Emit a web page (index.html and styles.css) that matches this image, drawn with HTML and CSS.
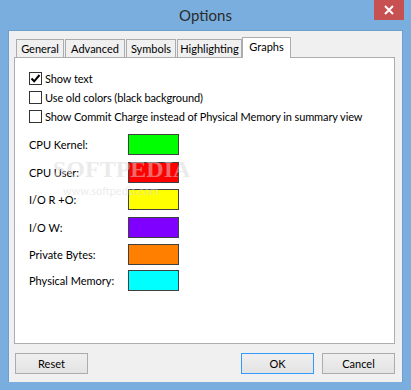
FILE: index.html
```html
<!DOCTYPE html>
<html lang="en">
<head>
<meta charset="UTF-8">
<title>Options</title>
<link rel="stylesheet" href="styles.css">
</head>
<body>

<div class="window">
    <div class="titlebar">
        <span class="title">Options</span>
        <div class="close-btn">
            <svg width="10" height="10" viewBox="0 0 10 10"><path d="M1 1 L9 9 M9 1 L1 9" stroke="#fff" stroke-width="2"/></svg>
        </div>
    </div>

    <div class="client">
        <div class="tabs">
            <div class="tab tab-general">General</div>
            <div class="tab tab-advanced">Advanced</div>
            <div class="tab tab-symbols">Symbols</div>
            <div class="tab tab-highlight">Highlighting</div>
            <div class="tab tab-graphs active">Graphs</div>
        </div>

        <div class="panel">
            <label class="check-row"><span class="checkbox checked"><svg width="11" height="11" viewBox="0 0 11 11"><path d="M1.5 5.5 L4.2 8.3 L9.5 2" fill="none" stroke="#000" stroke-width="2"/></svg></span>Show text</label>
            <label class="check-row"><span class="checkbox"></span>Use old colors (black background)</label>
            <label class="check-row"><span class="checkbox"></span>Show Commit Charge instead of Physical Memory in summary view</label>

            <div class="colors">
                <div class="color-row"><span class="color-label">CPU Kernel:</span><span class="swatch lime"></span></div>
                <div class="color-row"><span class="color-label">CPU User:</span><span class="swatch red"></span></div>
                <div class="color-row"><span class="color-label">I/O R +O:</span><span class="swatch yellow"></span></div>
                <div class="color-row"><span class="color-label">I/O W:</span><span class="swatch purple"></span></div>
                <div class="color-row short"><span class="color-label">Private Bytes:</span><span class="swatch orange"></span></div>
                <div class="color-row short"><span class="color-label">Physical Memory:</span><span class="swatch cyan"></span></div>
            </div>

            <div class="watermark">
                <div class="wm-big">SOFTPEDIA</div>
                <div class="wm-small">www.softpedia.com</div>
            </div>
        </div>

        <div class="buttons">
            <button class="btn">Reset</button>
            <div class="spacer"></div>
            <button class="btn default">OK</button>
            <button class="btn">Cancel</button>
        </div>
    </div>
</div>

</body>
</html>
```

FILE: styles.css
```css
body {
    margin: 0;
    font-family: Lato, "Noto Sans", sans-serif;
    font-size: 11px;
    line-height: 15px;
    color: #000;
}

.window {
    width: 411px;
    height: 390px;
    box-sizing: border-box;
    background-color: #79aedf;
    padding: 0 8px 8px 8px;
    display: flex;
    flex-direction: column;
}

.titlebar {
    height: 30px;
    position: relative;
    display: flex;
    justify-content: center;
    align-items: center;
}

.title {
    font-size: 15px;
    color: #2b2b2b;
    margin-top: 1px;
}

.close-btn {
    position: absolute;
    right: -1px;
    top: 0;
    width: 30px;
    height: 20px;
    background-color: #c75050;
    display: flex;
    justify-content: center;
    align-items: center;
}

.client {
    flex: 1;
    background-color: #f0f0f0;
    border: 1px solid #6f9fce;
    border-bottom: none;
    padding: 6px 7px 0 5px;
    display: flex;
    flex-direction: column;
}

.tabs {
    display: flex;
    align-items: flex-end;
    height: 20px;
    padding-left: 2px;
    position: relative;
    z-index: 1;
}

.tab {
    box-sizing: border-box;
    height: 18px;
    line-height: 17px;
    background-color: #f0f0f0;
    border: 1px solid #acacac;
    border-bottom: none;
    margin-right: 1px;
    text-align: center;
    color: #000;
}

.tab-general { width: 48px; }
.tab-advanced { width: 60px; }
.tab-symbols { width: 50px; }
.tab-highlight { width: 65px; margin-right: 0; }

.tab.active {
    width: 49px;
    height: 21px;
    margin-bottom: -1px;
    background-color: #fff;
    line-height: 17px;
    padding-bottom: 3px;
}

.panel {
    position: relative;
    box-sizing: border-box;
    height: 287px;
    width: 381px;
    background-color: #fff;
    border: 1px solid #adadad;
    padding: 11px 0 0 14px;
}

.check-row {
    display: flex;
    align-items: center;
    height: 19px;
    white-space: nowrap;
    letter-spacing: -0.1px;
}

.checkbox {
    flex-shrink: 0;
    box-sizing: border-box;
    width: 13px;
    height: 13px;
    border: 1px solid #333;
    background-color: #fff;
    margin-right: 3px;
    display: flex;
    justify-content: center;
    align-items: center;
}

.colors {
    margin-top: 8px;
}

.color-row {
    display: flex;
    align-items: center;
    height: 21px;
    margin-bottom: 6.5px;
}

.color-row.short {
    margin-bottom: 5px;
}

.color-label {
    width: 99px;
}

.swatch {
    box-sizing: border-box;
    width: 51px;
    height: 21px;
    border: 1px solid #404040;
}

.lime { background-color: #00ff00; }
.red { background-color: #ff0000; }
.yellow { background-color: #ffff00; }
.purple { background-color: #8000ff; }
.orange { background-color: #ff8000; }
.cyan { background-color: #00ffff; }

.watermark {
    position: absolute;
    left: 38px;
    top: 98px;
    color: rgba(215, 215, 215, 0.5);
    pointer-events: none;
}

.wm-big {
    font-family: "Liberation Serif", serif;
    font-weight: bold;
    font-size: 24px;
    line-height: 26px;
}

.wm-small {
    font-size: 11px;
    line-height: 13px;
    margin-top: 2px;
    margin-left: 10px;
}

.buttons {
    display: flex;
    margin-top: 9px;
    padding-left: 1px;
}

.spacer {
    flex: 1;
}

.btn {
    width: 73px;
    height: 21px;
    box-sizing: border-box;
    font-family: Lato, "Noto Sans", sans-serif;
    font-size: 11px;
    background: linear-gradient(#efefef, #e3e3e3);
    border: 1px solid #acacac;
    border-radius: 0;
    padding: 0;
    color: #000;
    margin-left: 8px;
}

.btn:first-child {
    margin-left: 0;
}

.btn.default {
    border-color: #3399ff;
}
```
